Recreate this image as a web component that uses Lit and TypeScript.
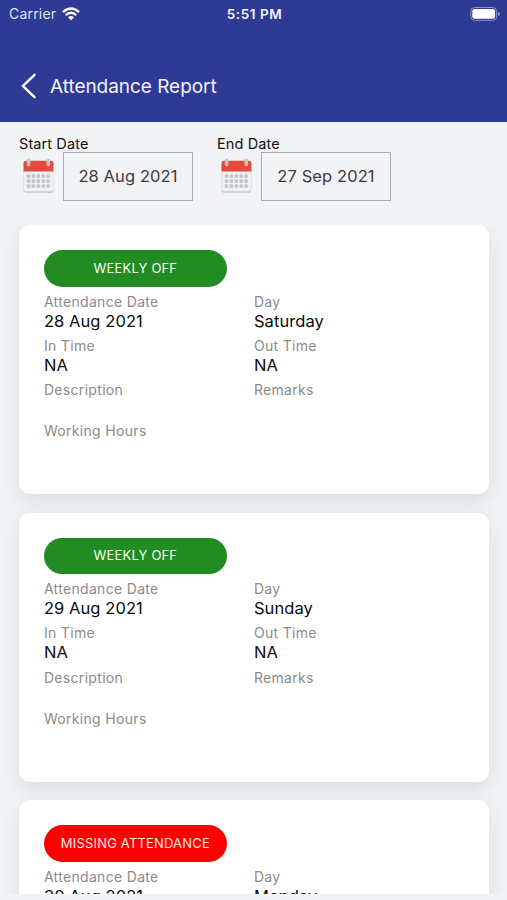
import { LitElement, html, css, svg } from "lit";
import { customElement, property } from "lit/decorators.js";

interface Entry {
  status: string;
  missing?: boolean;
  date: string;
  day: string;
  inTime: string;
  outTime: string;
}

const ENTRIES: Entry[] = [
  { status: "WEEKLY OFF", date: "28 Aug 2021", day: "Saturday", inTime: "NA", outTime: "NA" },
  { status: "WEEKLY OFF", date: "29 Aug 2021", day: "Sunday", inTime: "NA", outTime: "NA" },
  { status: "MISSING ATTENDANCE", missing: true, date: "30 Aug 2021", day: "Monday", inTime: "NA", outTime: "NA" },
];

@customElement("date-picker")
class DatePicker extends LitElement {
  @property() label = "";
  @property() value = "";

  static styles = css`
    :host { display: block; width: 198px; }
    .label { font-size: 14.5px; line-height: 19px; height: 18px; color: #111; letter-spacing: 0.1px; padding-top: 12px; }
    .row { display: flex; align-items: flex-start; }
    .icon { display: block; width: 32px; height: 38px; margin: 5px 9px 0 3px; }
    .box {
      box-sizing: border-box; width: 130px; height: 49px; border: 1px solid #a9abad;
      display: flex; align-items: center; justify-content: center; padding-bottom: 1px;
      font-size: 16.5px; letter-spacing: 0.1px; color: #3c3c3e; white-space: nowrap;
    }
  `;

  render() {
    const dots = [];
    for (let r = 0; r < 3; r++)
      for (let c = 0; c < 5; c++)
        dots.push(svg`<rect x=${4.7 + c * 4.9} y=${17.3 + r * 5} width="3.6" height="3.6" rx="1.2" fill="#c3c6ca"/>`);
    return html`
      <div class="label">${this.label}</div>
      <div class="row">
        <svg class="icon" viewBox="0 0 32 38">
          <path d="M1.500 13H31.500V32.500Q31.500 35.900 28.500 35.900H4.500Q1.500 35.900 1.500 32.500Z" fill="#cbced0"/>
          <path d="M1.800 12H31.200V31.500Q31.200 34.200 28.500 34.200H4.500Q1.800 34.200 1.800 31.500Z" fill="#eff0f2"/>
          <path d="M1.500 14.500V6.500Q1.500 3.700 4.300 3.700H28.700Q31.500 3.700 31.500 6.500V14.500Z" fill="#e24a3b"/>
          ${dots}
          <rect x="4.800" y="1.800" width="3.600" height="7.600" rx="1.800" fill="#c3c5c8"/>
          <rect x="24.500" y="1.800" width="3.600" height="7.600" rx="1.800" fill="#c3c5c8"/>
        </svg>
        <div class="box">${this.value}</div>
      </div>
    `;
  }
}

@customElement("attendance-card")
class AttendanceCard extends LitElement {
  @property({ attribute: false }) entry!: Entry;

  static styles = css`
    :host {
      display: block; box-sizing: border-box; flex: none; height: 269px; padding: 25px 24.5px;
      background: #fff; border-radius: 11px; box-shadow: 0 7px 20px rgba(0, 0, 0, 0.1);
    }
    .pill {
      width: 183px; height: 36.5px; border-radius: 19px; background: #228b22; color: #f4fff4;
      display: flex; align-items: center; justify-content: center; font-size: 13px;
      letter-spacing: 0.18px; white-space: nowrap; margin-bottom: 6px; box-sizing: border-box; padding-bottom: 1px;
    }
    .pill.missing { background: #fe0000; color: #ffe9e9; }
    .grid { display: grid; grid-template-columns: 210px 210px; }
    .field { height: 44.4px; }
    .empty { height: 41px; }
    .name { font-size: 14px; line-height: 18px; color: #8b8b8b; letter-spacing: 0.32px; }
    .value { font-size: 16.5px; line-height: 20px; color: #0b0b0b; letter-spacing: 0.08px; }
  `;

  private field(name: string, value = "") {
    return html`<div class=${value ? "field" : "field empty"}>
      <div class="name">${name}</div>
      <div class="value">${value}</div>
    </div>`;
  }

  render() {
    const e = this.entry;
    return html`
      <div class=${e.missing ? "pill missing" : "pill"}>${e.status}</div>
      <div class="grid">
        ${this.field("Attendance Date", e.date)} ${this.field("Day", e.day)}
        ${this.field("In Time", e.inTime)} ${this.field("Out Time", e.outTime)}
        ${this.field("Description")} ${this.field("Remarks")}
        ${this.field("Working Hours")}
      </div>
    `;
  }
}

@customElement("app-root")
class AppRoot extends LitElement {
  static styles = css`
    :host {
      display: flex; flex-direction: column; height: 900px; overflow: hidden;
      background: #f2f3f5; font-family: Inter, "Liberation Sans", sans-serif;
    }
    header { flex: none; height: 122px; background: #2f3a94; color: #f3f4ff; }
    .status {
      display: grid; grid-template-columns: 1fr auto 1fr; align-items: center;
      height: 27px; padding: 0 7px 0 9px;
    }
    .carrier { display: flex; align-items: center; gap: 6px; font-size: 14px; letter-spacing: 0.2px; color: #dfe2f7; }
    .time { font-size: 13.5px; font-weight: 600; letter-spacing: 0.55px; }
    .battery { justify-self: end; display: block; }
    .title { display: flex; align-items: center; height: 60px; margin-top: 29px; padding-left: 20px; }
    .back { display: block; margin-right: 13px; }
    h1 { margin: 0; font-size: 19px; font-weight: 400; letter-spacing: -0.04px; }
    .dates { flex: none; display: flex; height: 103px; padding-left: 19px; }
    .list { flex: none; height: 669px; overflow: hidden; }
    .cards { display: flex; flex-direction: column; gap: 18.5px; padding: 0 18.5px 0 19.4px; }
  `;

  render() {
    return html`
      <header>
        <div class="status">
          <div class="carrier">
            Carrier
            <svg width="18" height="14" viewBox="0 0 18 14" fill="none" stroke="#fff" stroke-width="2.300">
              <path d="M0.900 5.200Q9 -2.200 17.100 5.200"/>
              <path d="M3.700 8.200Q9 3.400 14.300 8.200"/>
              <path d="M6 10.200Q9 7.700 12 10.200L9 13.300Z" fill="#fff" stroke="none"/>
            </svg>
          </div>
          <div class="time">5:51 PM</div>
          <svg class="battery" width="30" height="14" viewBox="0 0 30 14">
            <rect x="0.800" y="0.500" width="25.800" height="12.800" rx="3.800" fill="none" stroke="#8d93c9"/>
            <rect x="2.300" y="2" width="22.800" height="9.800" rx="2.200" fill="#fff"/>
            <path d="M27.800 4.700Q30 5.500 30 7T27.800 9.300Z" fill="#8d93c9"/>
          </svg>
        </div>
        <div class="title">
          <svg class="back" width="17" height="26" viewBox="0 0 17 26" fill="none" stroke="#fff" stroke-width="2.400" stroke-linecap="round" stroke-linejoin="miter">
            <path d="M14.500 1.800L3 13L14.500 24.200"/>
          </svg>
          <h1>Attendance Report</h1>
        </div>
      </header>
      <div class="dates">
        <date-picker label="Start Date" value="28 Aug 2021"></date-picker>
        <date-picker label="End Date" value="27 Sep 2021"></date-picker>
      </div>
      <div class="list">
        <div class="cards">
          ${ENTRIES.map((e) => html`<attendance-card .entry=${e}></attendance-card>`)}
        </div>
      </div>
    `;
  }
}
